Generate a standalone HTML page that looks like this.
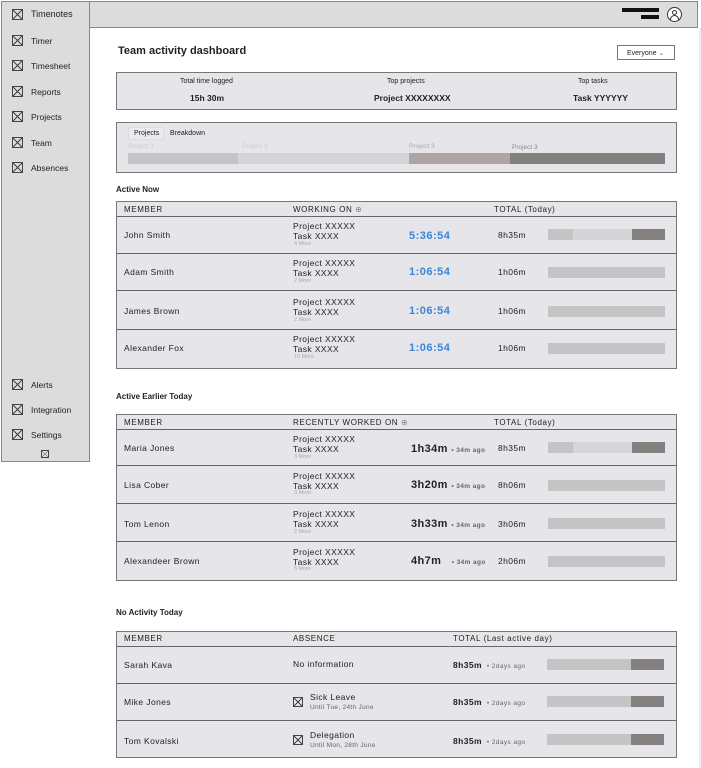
<!DOCTYPE html>
<html><head><meta charset="utf-8"><style>
*{margin:0;padding:0;box-sizing:border-box}
body{width:701px;height:768px;background:#fff;position:relative;overflow:hidden;font-family:"Liberation Sans",sans-serif;color:#222}
.a{position:absolute;white-space:nowrap}
.ic{position:absolute;width:11px;height:11px;border:1px solid #444;background:linear-gradient(45deg,transparent 46%,#444 46%,#444 54%,transparent 54%),linear-gradient(-45deg,transparent 46%,#444 46%,#444 54%,transparent 54%)}
.nav{font-size:8.5px;color:#222}
.box{position:absolute;left:116px;width:561px;background:#e6e5ea;border:1px solid #777}
.row{position:absolute;left:0;right:0;border-top:1px solid #666}
.t{font-size:8.5px;letter-spacing:.4px}
.h{font-size:8px;letter-spacing:.6px;color:#222}
.tm{font-size:11px;color:#3a86d6;letter-spacing:.5px;font-weight:bold}
.bt{font-size:11px;font-weight:bold;letter-spacing:.4px}
.m{font-size:5.5px;color:#aaa}
.s{font-size:6.5px;color:#666}
.sec{font-size:8px;font-weight:bold}
</style></head><body>
<!-- sidebar -->
<div class="a" style="left:1px;top:1px;width:89px;height:461px;background:#dcdcdc;border:1px solid #888"></div>
<div class="ic" style="left:12px;top:9px"></div><div class="a nav" style="left:31px;top:9px;font-size:9px">Timenotes</div>
<div class="ic" style="left:12px;top:35px"></div><div class="a nav" style="left:31px;top:36px">Timer</div>
<div class="ic" style="left:12px;top:60px"></div><div class="a nav" style="left:31px;top:61px">Timesheet</div>
<div class="ic" style="left:12px;top:86px"></div><div class="a nav" style="left:31px;top:87px">Reports</div>
<div class="ic" style="left:12px;top:111px"></div><div class="a nav" style="left:31px;top:112px">Projects</div>
<div class="ic" style="left:12px;top:137px"></div><div class="a nav" style="left:31px;top:138px">Team</div>
<div class="ic" style="left:12px;top:162px"></div><div class="a nav" style="left:31px;top:163px">Absences</div>
<div class="ic" style="left:12px;top:379px"></div><div class="a nav" style="left:31px;top:380px">Alerts</div>
<div class="ic" style="left:12px;top:404px"></div><div class="a nav" style="left:31px;top:405px">Integration</div>
<div class="ic" style="left:12px;top:429px"></div><div class="a nav" style="left:31px;top:430px">Settings</div>
<div class="ic" style="left:41px;top:450px;width:8px;height:8px"></div>
<!-- topbar -->
<div class="a" style="left:89px;top:1px;width:609px;height:27px;background:#dcdcdc;border:1px solid #888"></div>
<div class="a" style="left:622px;top:8px;width:37px;height:4px;background:#111"></div>
<div class="a" style="left:641px;top:15px;width:18px;height:4px;background:#111"></div>
<div class="a" style="left:667px;top:7px;width:15px;height:15px;border:1px solid #333;border-radius:50%;background:#fff"></div>
<div class="a" style="left:672px;top:10px;width:5px;height:5px;border:1px solid #333;border-radius:50%"></div>
<div class="a" style="left:670px;top:15px;width:9px;height:5px;border:1px solid #333;border-bottom:none;border-radius:5px 5px 0 0"></div>
<div class="a" style="left:699px;top:28px;width:2px;height:740px;background:#eee"></div>
<!-- title -->
<div class="a" style="left:118px;top:45px;font-size:11px;font-weight:bold">Team activity dashboard</div>
<div class="a" style="left:617px;top:45px;width:58px;height:15px;border:1px solid #777;font-size:7px;padding:3px 0 0 9px">Everyone <span style="color:#666">&#8964;</span></div>
<!-- summary -->
<div class="box" style="top:72px;height:38px"></div>
<div class="a" style="left:180px;top:78px;font-size:7px">Total time logged</div>
<div class="a" style="left:190px;top:93px;font-size:8.5px;font-weight:bold">15h 30m</div>
<div class="a" style="left:387px;top:78px;font-size:7px">Top projects</div>
<div class="a" style="left:374px;top:93px;font-size:8.5px;font-weight:bold">Project XXXXXXXX</div>
<div class="a" style="left:578px;top:78px;font-size:7px">Top tasks</div>
<div class="a" style="left:573px;top:93px;font-size:8.5px;font-weight:bold">Task YYYYYY</div>
<!-- breakdown -->
<div class="box" style="top:122px;height:51px"></div>
<div class="a" style="left:128px;top:127px;width:36px;height:13px;border:1px solid #ddd;background:#eceaee"></div>
<div class="a" style="left:134px;top:130px;font-size:7px">Projects</div>
<div class="a" style="left:170px;top:130px;font-size:7px">Breakdown</div>
<div class="a" style="left:128px;top:143px;font-size:6.5px;color:#ccc">Project 3</div>
<div class="a" style="left:242px;top:143px;font-size:6.5px;color:#ccc">Project 3</div>
<div class="a" style="left:409px;top:143px;font-size:6.5px;color:#aaa">Project 3</div>
<div class="a" style="left:512px;top:144px;font-size:6.5px;color:#888">Project 3</div>
<div class="a" style="left:128px;top:153px;width:110px;height:11px;background:#c4c4c4"></div>
<div class="a" style="left:238px;top:153px;width:171px;height:11px;background:#d6d4d6"></div>
<div class="a" style="left:409px;top:153px;width:101px;height:11px;background:#aea4a4"></div>
<div class="a" style="left:510px;top:153px;width:155px;height:11px;background:#858080"></div>

<!-- Active now -->
<div class="a sec" style="left:116px;top:185px">Active Now</div>
<div class="box" style="top:201px;height:168px">
 <div class="row" style="top:14px"></div><div class="row" style="top:51px"></div><div class="row" style="top:88px"></div><div class="row" style="top:127px"></div>
</div>
<div class="a h" style="left:124px;top:205px">MEMBER</div>
<div class="a h" style="left:293px;top:205px">WORKING ON <span style="color:#888">&#8853;</span></div>
<div class="a h" style="left:494px;top:205px">TOTAL (Today)</div>

<div class="a t" style="left:124px;top:230px">John Smith</div>
<div class="a t" style="left:293px;top:221px;line-height:10px">Project XXXXX<br>Task XXXX</div><div class="a m" style="left:294px;top:241px">4 More</div>
<div class="a tm" style="left:409px;top:230px">5:36:54</div>
<div class="a t" style="left:498px;top:230px">8h35m</div>
<div class="a" style="left:548px;top:229px;width:25px;height:11px;background:#c4c4c4"></div><div class="a" style="left:573px;top:229px;width:59px;height:11px;background:#d6d4d6"></div><div class="a" style="left:632px;top:229px;width:33px;height:11px;background:#858080"></div>

<div class="a t" style="left:124px;top:267px">Adam Smith</div>
<div class="a t" style="left:293px;top:258px;line-height:10px">Project XXXXX<br>Task XXXX</div><div class="a m" style="left:294px;top:278px">2 More</div>
<div class="a tm" style="left:409px;top:266px">1:06:54</div>
<div class="a t" style="left:498px;top:267px">1h06m</div>
<div class="a" style="left:548px;top:267px;width:117px;height:11px;background:#c4c4c4"></div>

<div class="a t" style="left:124px;top:306px">James Brown</div>
<div class="a t" style="left:293px;top:297px;line-height:10px">Project XXXXX<br>Task XXXX</div><div class="a m" style="left:294px;top:317px">2 More</div>
<div class="a tm" style="left:409px;top:305px">1:06:54</div>
<div class="a t" style="left:498px;top:306px">1h06m</div>
<div class="a" style="left:548px;top:306px;width:117px;height:11px;background:#c4c4c4"></div>

<div class="a t" style="left:124px;top:343px">Alexander Fox</div>
<div class="a t" style="left:293px;top:334px;line-height:10px">Project XXXXX<br>Task XXXX</div><div class="a m" style="left:294px;top:354px">10 More</div>
<div class="a tm" style="left:409px;top:342px">1:06:54</div>
<div class="a t" style="left:498px;top:343px">1h06m</div>
<div class="a" style="left:548px;top:343px;width:117px;height:11px;background:#c4c4c4"></div>

<!-- Active earlier -->
<div class="a sec" style="left:116px;top:392px">Active Earlier Today</div>
<div class="box" style="top:414px;height:167px">
 <div class="row" style="top:14px"></div><div class="row" style="top:50px"></div><div class="row" style="top:88px"></div><div class="row" style="top:126px"></div>
</div>
<div class="a h" style="left:124px;top:418px">MEMBER</div>
<div class="a h" style="left:293px;top:418px">RECENTLY WORKED ON <span style="color:#888">&#8853;</span></div>
<div class="a h" style="left:494px;top:418px">TOTAL (Today)</div>

<div class="a t" style="left:124px;top:443px">Maria Jones</div>
<div class="a t" style="left:293px;top:434px;line-height:10px">Project XXXXX<br>Task XXXX</div><div class="a m" style="left:294px;top:454px">3 More</div>
<div class="a bt" style="left:411px;top:443px">1h34m <span class="s">• 34m ago</span></div>
<div class="a t" style="left:498px;top:443px">8h35m</div>
<div class="a" style="left:548px;top:442px;width:25px;height:11px;background:#c4c4c4"></div><div class="a" style="left:573px;top:442px;width:59px;height:11px;background:#d6d4d6"></div><div class="a" style="left:632px;top:442px;width:33px;height:11px;background:#858080"></div>

<div class="a t" style="left:124px;top:480px">Lisa Cober</div>
<div class="a t" style="left:293px;top:471px;line-height:10px">Project XXXXX<br>Task XXXX</div><div class="a m" style="left:294px;top:490px">3 More</div>
<div class="a bt" style="left:411px;top:479px">3h20m <span class="s">• 34m ago</span></div>
<div class="a t" style="left:498px;top:480px">8h06m</div>
<div class="a" style="left:548px;top:480px;width:117px;height:11px;background:#c4c4c4"></div>

<div class="a t" style="left:124px;top:519px">Tom Lenon</div>
<div class="a t" style="left:293px;top:509px;line-height:10px">Project XXXXX<br>Task XXXX</div><div class="a m" style="left:294px;top:529px">2 More</div>
<div class="a bt" style="left:411px;top:518px">3h33m <span class="s">• 34m ago</span></div>
<div class="a t" style="left:498px;top:519px">3h06m</div>
<div class="a" style="left:548px;top:518px;width:117px;height:11px;background:#c4c4c4"></div>

<div class="a t" style="left:124px;top:556px">Alexandeer Brown</div>
<div class="a t" style="left:293px;top:547px;line-height:10px">Project XXXXX<br>Task XXXX</div><div class="a m" style="left:294px;top:566px">5 More</div>
<div class="a bt" style="left:411px;top:555px">4h7m &nbsp;&nbsp;<span class="s">• 34m ago</span></div>
<div class="a t" style="left:498px;top:556px">2h06m</div>
<div class="a" style="left:548px;top:556px;width:117px;height:11px;background:#c4c4c4"></div>

<!-- No activity -->
<div class="a sec" style="left:116px;top:608px">No Activity Today</div>
<div class="box" style="top:631px;height:127px">
 <div class="row" style="top:14px"></div><div class="row" style="top:51px"></div><div class="row" style="top:88px"></div>
</div>
<div class="a h" style="left:124px;top:634px">MEMBER</div>
<div class="a h" style="left:293px;top:634px">ABSENCE</div>
<div class="a h" style="left:453px;top:634px">TOTAL (Last active day)</div>

<div class="a t" style="left:124px;top:660px">Sarah Kava</div>
<div class="a t" style="left:293px;top:659px">No information</div>
<div class="a t" style="left:453px;top:660px;font-weight:bold">8h35m <span class="s" style="font-weight:normal">&nbsp;• 2days ago</span></div>
<div class="a" style="left:547px;top:659px;width:84px;height:11px;background:#c4c4c4"></div><div class="a" style="left:631px;top:659px;width:33px;height:11px;background:#858080"></div>

<div class="a t" style="left:124px;top:697px">Mike Jones</div>
<div class="ic" style="left:293px;top:697px;width:10px;height:10px"></div>
<div class="a t" style="left:310px;top:692px">Sick Leave</div><div class="a s" style="left:310px;top:704px;letter-spacing:.3px">Until Tue, 24th June</div>
<div class="a t" style="left:453px;top:697px;font-weight:bold">8h35m <span class="s" style="font-weight:normal">&nbsp;• 2days ago</span></div>
<div class="a" style="left:547px;top:696px;width:84px;height:11px;background:#c4c4c4"></div><div class="a" style="left:631px;top:696px;width:33px;height:11px;background:#858080"></div>

<div class="a t" style="left:124px;top:736px">Tom Kovalski</div>
<div class="ic" style="left:293px;top:735px;width:10px;height:10px"></div>
<div class="a t" style="left:310px;top:730px">Delegation</div><div class="a s" style="left:310px;top:742px;letter-spacing:.3px">Until Mon, 28th June</div>
<div class="a t" style="left:453px;top:736px;font-weight:bold">8h35m <span class="s" style="font-weight:normal">&nbsp;• 2days ago</span></div>
<div class="a" style="left:547px;top:734px;width:84px;height:11px;background:#c4c4c4"></div><div class="a" style="left:631px;top:734px;width:33px;height:11px;background:#858080"></div>
</body></html>
